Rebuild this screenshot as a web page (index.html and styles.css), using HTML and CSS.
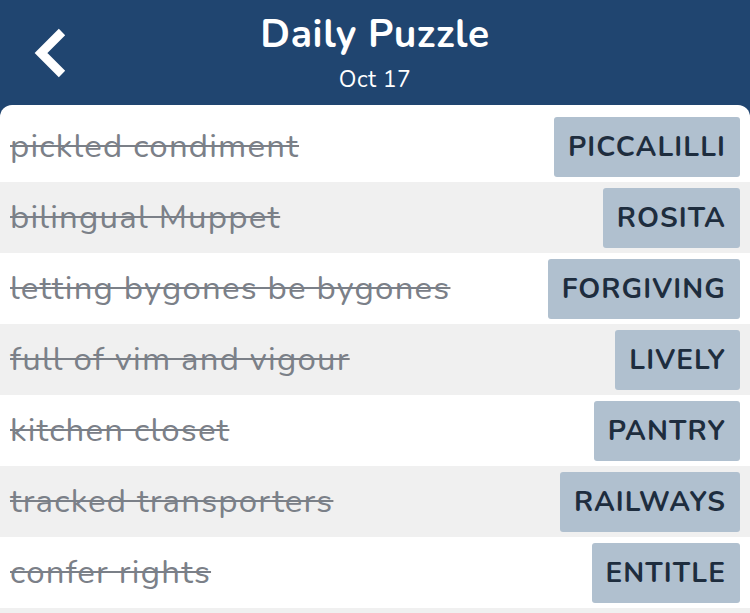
FILE: index.html
```html
<!DOCTYPE html>
<html lang="en">
<head>
    <meta charset="UTF-8">
    <title>Daily Puzzle</title>
    <link rel="stylesheet" href="styles.css">
</head>
<body>
    <header class="topbar">
        <button class="back-btn" aria-label="Back">
            <svg width="40" height="56" viewBox="0 0 40 56">
                <polyline points="34,7 13,28 34,49" fill="none" stroke="#fff" stroke-width="9" stroke-linejoin="miter" stroke-linecap="butt"/>
            </svg>
        </button>
        <div class="title-wrap">
            <h1 class="title">Daily Puzzle</h1>
            <div class="subtitle">Oct 17</div>
        </div>
    </header>

    <main class="panel">
        <ul class="clue-list">
            <li class="clue-row"><span class="clue">pickled condiment</span><span class="answer">PICCALILLI</span></li>
            <li class="clue-row"><span class="clue">bilingual Muppet</span><span class="answer">ROSITA</span></li>
            <li class="clue-row"><span class="clue">letting bygones be bygones</span><span class="answer">FORGIVING</span></li>
            <li class="clue-row"><span class="clue">full of vim and vigour</span><span class="answer">LIVELY</span></li>
            <li class="clue-row"><span class="clue">kitchen closet</span><span class="answer">PANTRY</span></li>
            <li class="clue-row"><span class="clue">tracked transporters</span><span class="answer">RAILWAYS</span></li>
            <li class="clue-row"><span class="clue">confer rights</span><span class="answer">ENTITLE</span></li>
            <li class="clue-row clue-row-peek"></li>
        </ul>
    </main>
</body>
</html>
```

FILE: styles.css
```css
    body {
        margin: 0;
        background: #204570;
        font-family: 'Nunito', 'Lato', sans-serif;
        overflow: hidden;
    }

    .topbar {
        height: 105px;
        position: relative;
        display: flex;
        justify-content: center;
        color: #fff;
    }

    .back-btn {
        position: absolute;
        left: 28px;
        top: 25px;
        padding: 0;
        border: none;
        background: none;
        cursor: pointer;
    }

    .back-btn svg {
        display: block;
    }

    .title-wrap {
        text-align: center;
        padding-top: 12px;
    }

    .title {
        margin: 0;
        font-size: 39px;
        font-weight: 700;
        line-height: 46px;
        letter-spacing: 0.6px;
    }

    .subtitle {
        margin-top: 8px;
        font-size: 23px;
        line-height: 28px;
        letter-spacing: 0.4px;
    }

    .panel {
        background: #fff;
        border-radius: 12px 12px 0 0;
        padding-top: 6px;
    }

    .clue-list {
        list-style: none;
        margin: 0;
        padding: 0;
    }

    .clue-row {
        height: 71px;
        display: flex;
        align-items: center;
        justify-content: space-between;
        padding: 0 10px;
        box-sizing: border-box;
    }

    .clue-row:nth-child(even) {
        background: #f0f0f0;
    }

    .clue-row-peek {
        height: 5px;
    }

    .clue {
        font-size: 33px;
        letter-spacing: 1.2px;
        color: #7b8088;
        text-decoration: line-through;
        text-decoration-thickness: 2px;
    }

    .answer {
        height: 60px;
        display: flex;
        align-items: center;
        padding: 0 14px;
        background: #b0c0cf;
        border-radius: 3px;
        color: #1e2d3e;
        font-size: 28px;
        font-weight: 700;
        letter-spacing: 1.1px;
    }
```
